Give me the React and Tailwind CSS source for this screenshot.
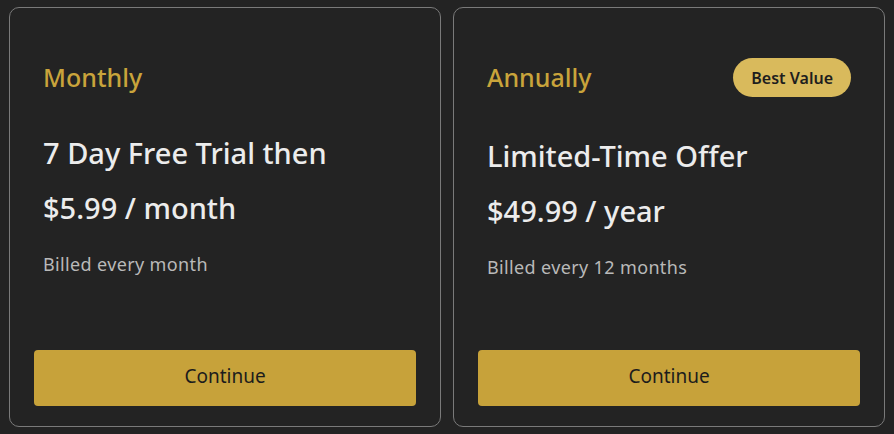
import React from 'react';

const plans = [
  {
    id: 'monthly',
    name: 'Monthly',
    headline: '7 Day Free Trial then',
    price: '$5.99 / month',
    note: 'Billed every month',
  },
  {
    id: 'annually',
    name: 'Annually',
    badge: 'Best Value',
    headline: 'Limited-Time Offer',
    price: '$49.99 / year',
    note: 'Billed every 12 months',
  },
];

function PlanCard({ plan }) {
  return (
    <div className="flex-1 flex flex-col rounded-[10px] border border-[#7a7a7a] bg-[#232323] px-6 pt-[50px] pb-5">
      <div
        className={
          plan.badge
            ? 'flex items-center justify-between px-[9px] h-[39px]'
            : 'flex items-center justify-between px-[9px] h-[33px] mt-[3px]'
        }
      >
        <span className="text-[25px] leading-[33px] font-medium text-[#c9a43b]">{plan.name}</span>
        {plan.badge && (
          <span className="flex items-center h-[39px] px-[18px] rounded-full bg-[#d9ba5c] text-[16px] font-semibold text-[#1e1e1e]">
            {plan.badge}
          </span>
        )}
      </div>
      <div className="pl-[9px] mt-[41px] text-[29px] leading-[36px] font-medium text-[#ececec]">{plan.headline}</div>
      <div className="pl-[9px] mt-[19px] text-[29px] leading-[36px] font-medium text-[#ececec]">{plan.price}</div>
      <div className="pl-[9px] mt-[26px] text-[18px] leading-[24px] tracking-[0.02em] text-[#b9b9b9]">{plan.note}</div>
      <div className="flex-1" />
      <button className="h-[56px] w-full rounded-[4px] bg-[#c7a23a] pb-[3px] text-[19px] text-[#1c1c1c]">
        Continue
      </button>
    </div>
  );
}

export default function App() {
  return (
    <div
      className="w-[894px] h-[434px] bg-[#232323] flex gap-[12px] px-[9px] py-[7px]"
      style={{ fontFamily: '"Noto Sans", "Open Sans", sans-serif' }}
    >
      {plans.map((plan) => (
        <PlanCard key={plan.id} plan={plan} />
      ))}
    </div>
  );
}
